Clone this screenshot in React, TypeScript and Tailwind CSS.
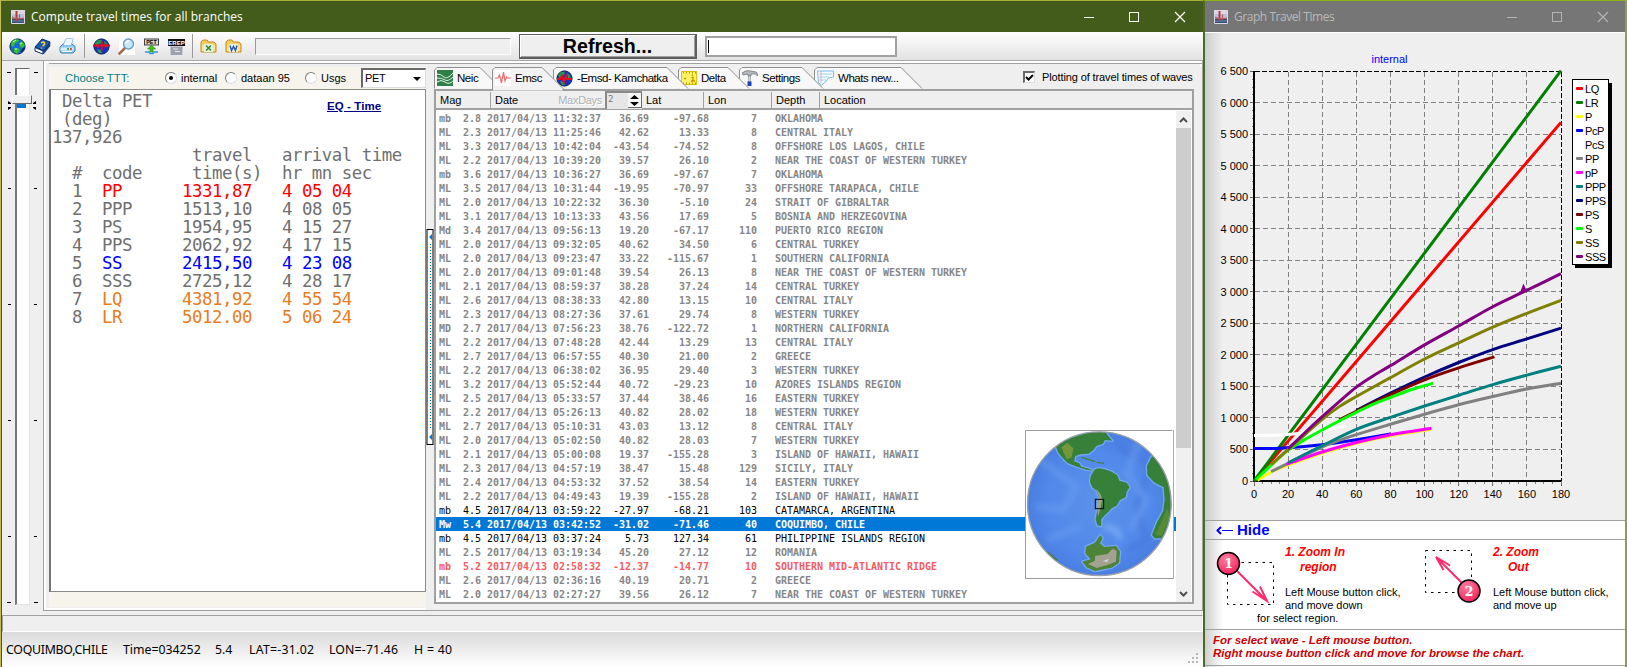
import React from "react";

type Tone = "gray" | "black" | "red" | "selected";
type Quake = [string, string, string, string, string, string, string, Tone?];

const quakes: Quake[] = [
  ["mb", "2.8", "11:32:37", "36.69", "-97.68", "7", "OKLAHOMA"],
  ["ML", "2.3", "11:25:46", "42.62", "13.33", "8", "CENTRAL ITALY"],
  ["ML", "3.3", "10:42:04", "-43.54", "-74.52", "8", "OFFSHORE LOS LAGOS, CHILE"],
  ["ML", "2.2", "10:39:20", "39.57", "26.10", "2", "NEAR THE COAST OF WESTERN TURKEY"],
  ["mb", "3.6", "10:36:27", "36.69", "-97.67", "7", "OKLAHOMA"],
  ["ML", "3.5", "10:31:44", "-19.95", "-70.97", "33", "OFFSHORE TARAPACA, CHILE"],
  ["ML", "2.0", "10:22:32", "36.30", "-5.10", "24", "STRAIT OF GIBRALTAR"],
  ["ML", "3.1", "10:13:33", "43.56", "17.69", "5", "BOSNIA AND HERZEGOVINA"],
  ["Md", "3.4", "09:56:13", "19.20", "-67.17", "110", "PUERTO RICO REGION"],
  ["ML", "2.0", "09:32:05", "40.62", "34.50", "6", "CENTRAL TURKEY"],
  ["ML", "2.0", "09:23:47", "33.22", "-115.67", "1", "SOUTHERN CALIFORNIA"],
  ["ML", "2.0", "09:01:48", "39.54", "26.13", "8", "NEAR THE COAST OF WESTERN TURKEY"],
  ["ML", "2.1", "08:59:37", "38.28", "37.24", "14", "CENTRAL TURKEY"],
  ["ML", "2.6", "08:38:33", "42.80", "13.15", "10", "CENTRAL ITALY"],
  ["ML", "2.3", "08:27:36", "37.61", "29.74", "8", "WESTERN TURKEY"],
  ["MD", "2.7", "07:56:23", "38.76", "-122.72", "1", "NORTHERN CALIFORNIA"],
  ["ML", "2.2", "07:48:28", "42.44", "13.29", "13", "CENTRAL ITALY"],
  ["ML", "2.7", "06:57:55", "40.30", "21.00", "2", "GREECE"],
  ["ML", "2.2", "06:38:02", "36.95", "29.40", "3", "WESTERN TURKEY"],
  ["ML", "3.2", "05:52:44", "40.72", "-29.23", "10", "AZORES ISLANDS REGION"],
  ["ML", "2.5", "05:33:57", "37.44", "38.46", "16", "EASTERN TURKEY"],
  ["ML", "2.2", "05:26:13", "40.82", "28.02", "18", "WESTERN TURKEY"],
  ["ML", "2.7", "05:10:31", "43.03", "13.12", "8", "CENTRAL ITALY"],
  ["ML", "2.0", "05:02:50", "40.82", "28.03", "7", "WESTERN TURKEY"],
  ["ML", "2.1", "05:00:08", "19.37", "-155.28", "3", "ISLAND OF HAWAII, HAWAII"],
  ["ML", "2.3", "04:57:19", "38.47", "15.48", "129", "SICILY, ITALY"],
  ["ML", "2.4", "04:53:32", "37.52", "38.54", "14", "EASTERN TURKEY"],
  ["ML", "2.2", "04:49:43", "19.39", "-155.28", "2", "ISLAND OF HAWAII, HAWAII"],
  ["mb", "4.5", "03:59:22", "-27.97", "-68.21", "103", "CATAMARCA, ARGENTINA", "black"],
  ["Mw", "5.4", "03:42:52", "-31.02", "-71.46", "40", "COQUIMBO, CHILE", "selected"],
  ["mb", "4.5", "03:37:24", "5.73", "127.34", "61", "PHILIPPINE ISLANDS REGION", "black"],
  ["ML", "2.5", "03:19:34", "45.20", "27.12", "12", "ROMANIA"],
  ["mb", "5.2", "02:58:32", "-12.37", "-14.77", "10", "SOUTHERN MID-ATLANTIC RIDGE", "red"],
  ["ML", "2.6", "02:36:16", "40.19", "20.71", "2", "GREECE"],
  ["ML", "2.0", "02:27:27", "39.56", "26.12", "7", "NEAR THE COAST OF WESTERN TURKEY"],
];

const toneClass: Record<Tone, string> = {
  gray: "font-bold text-[#868686]",
  black: "font-normal text-black",
  red: "font-bold text-[#f45c60]",
  selected: "bg-[#0078d7] font-bold text-white",
};

const quakeLine = ([type, mag, time, lat, lon, depth, place]: Quake) =>
  `${type}  ${mag} 2017/04/13 ${time}${lat.padStart(8)}${lon.padStart(10)}${depth.padStart(8)}   ${place}`;

const phases: [string, string, string, string][] = [
  ["PP", "1331,87", "4 05 04", "text-[#ff0000]"],
  ["PPP", "1513,10", "4 08 05", ""],
  ["PS", "1954,95", "4 15 27", ""],
  ["PPS", "2062,92", "4 17 15", ""],
  ["SS", "2415,50", "4 23 08", "text-[#0000ff]"],
  ["SSS", "2725,12", "4 28 17", ""],
  ["LQ", "4381,92", "4 55 54", "text-[#e87d22]"],
  ["LR", "5012.00", "5 06 24", "text-[#e87d22]"],
];

/* ---------- icons ---------- */

function AppIcon() {
  return (
    <svg width="14" height="14" viewBox="0 0 14 14">
      <rect width="14" height="14" fill="#b9c3dc" />
      <path d="M0 0h14v4H0z" fill="#e0d5e0" />
      <rect y="8.500" width="14" height="5.500" fill="#34507a" />
      <path d="M1 11h12" stroke="#6d88ad" />
      <path d="M5.500 1v10" stroke="#b8383e" strokeWidth="2" />
      <path d="M8.500 4.500v5M1 7q4 3 12 1" stroke="#c0585c" strokeWidth="1.200" fill="none" />
      <path d="M.5.5h13v13H.5z" fill="none" stroke="#d9d9e6" />
    </svg>
  );
}

function Globe({ pulse = false, band = false }: { pulse?: boolean; band?: boolean }) {
  return (
    <svg width="17" height="17" viewBox="0 0 17 17">
      <circle cx="8.5" cy="8.5" r="7.6" fill={pulse ? "#1a2fc4" : "#1468e0"} stroke="#0b2348" />
      {pulse ? (
        <path d="M2 5l3-3 4 0-1 3-3 2-2 1zM11 3l3 2 1 4-3-1zM4 11l4 1 1 3-3 0z" fill="#27984a" />
      ) : (
        <>
          <path d="M2 6l1-3 4-2 3 1-1 2-3 1-1 3-2 1zM10 5l3-2 3 4-2 3-3-1zM5 10l4 0 2 2-3 4-3-2z" fill="#35c02f" />
          <path d="M4 4l3-2M11 6l2-1M6 11h2" stroke="#d8ffd0" />
          <path d="M12 14l3-4" stroke="#0a1f50" strokeWidth="1.500" />
        </>
      )}
      {band && <path d="M1 9h3l2-3 2 6 2-6 1 3h5" stroke="#e60f1d" strokeWidth="2" fill="none" />}
      {pulse && !band && <path d="M0 7.500h17M9 3.500v9M5 6v4M12.500 5.500v4" stroke="#e60f1d" strokeWidth="1.800" fill="none" />}
    </svg>
  );
}

function BookIcon() {
  return (
    <svg width="17" height="17" viewBox="0 0 17 17">
      <path d="M1 9L8 1l8 3-6 9z" fill="#1b5ab4" stroke="#0d2f66" />
      <path d="M1 9.500v3.500l8 3v-3z" fill="#fff" stroke="#0d2f66" />
      <path d="M9.500 13.500L16 4.500V8L9.500 16z" fill="#123f85" stroke="#0d2f66" strokeWidth=".6" />
      <path d="M7 5q3-2 3.500 0T8.500 8M7.500 9.600v1" stroke="#ffd530" strokeWidth="1.500" fill="none" />
    </svg>
  );
}

function PrinterIcon() {
  return (
    <svg width="17" height="17" viewBox="0 0 17 17">
      <path d="M4.500 7l2.500-6h7l-2 6z" fill="#e9f6ff" stroke="#4c93c8" />
      <path d="M1 9l3-3h9l3 2.500v4.500l-2 2H2l-1-2z" fill="#8ec6ea" stroke="#3f82b6" />
      <path d="M4.500 7l2.500-6h7l-2 6z" fill="#e9f6ff" />
      <path d="M1.500 9.500h13v3h-13z" fill="#d6effc" />
      <path d="M3 13.500h10" stroke="#fff" />
      <path d="M8 11h2" stroke="#0b9a2e" strokeWidth="1.400" />
      <path d="M11 11h2" stroke="#e02020" strokeWidth="1.400" />
    </svg>
  );
}

function MagnifierIcon() {
  return (
    <svg width="17" height="17" viewBox="0 0 17 17">
      <rect x="1" y="1" width="16" height="16" fill="#fff" />
      <path d="M1.500 15.500L7 10" stroke="#a5684a" strokeWidth="2.600" strokeLinecap="round" />
      <circle cx="10.500" cy="6" r="5" fill="#c6e6fb" stroke="#6a9cc8" strokeWidth="1.400" />
      <path d="M8 6q0-3 3-3" stroke="#fff" strokeWidth="1.400" fill="none" />
    </svg>
  );
}

function PetIcon() {
  return (
    <svg width="17" height="17" viewBox="0 0 17 17">
      <rect x="1.500" y="1" width="14" height="6" fill="#dcdcdc" stroke="#3c3c3c" />
      <text x="8.500" y="6.200" textAnchor="middle" fontFamily="Liberation Sans" fontWeight="700" fontSize="5.500">PET</text>
      <path d="M8.500 7l4 4h-2.500v3H7v-3H4.500z" fill="#3fc019" stroke="#258a0d" strokeWidth=".6" />
      <path d="M2 14h4l1 1.500h3l1-1.500h4" stroke="#2c9ad8" strokeWidth="1.600" fill="none" />
    </svg>
  );
}

function RepIcon() {
  return (
    <svg width="17" height="17" viewBox="0 0 17 17">
      <rect x="2" y="7" width="13" height="10" fill="#c8c9d2" />
      <rect x="3" y="9" width="11" height="8" fill="#9fa0ad" />
      <path d="M5 11h5M7 13.500h5" stroke="#e6e6ee" />
      <rect width="17" height="7" y="1" fill="#101010" />
      <text x="8.500" y="6.700" textAnchor="middle" fontFamily="Liberation Sans" fontWeight="700" fontSize="6" fill="#fff">EREP</text>
    </svg>
  );
}

function FolderIcon({ kind }: { kind: "X" | "W" }) {
  return (
    <svg width="17" height="17" viewBox="0 0 17 17">
      <path d="M1 14V4l2-2h4l1.500 2H14l2 2v8z" fill="#f3ce5c" stroke="#c58a1d" />
      <path d="M2 7h13v6H2z" fill="#fbe48b" />
      <rect x="4" y="6" width="9" height="8" fill={kind === "X" ? "#e9f3e4" : "#e9effa"} />
      {kind === "X" ? (
        <path d="M6 7.500l5 5M11 7.500l-5 5" stroke="#2f8f3a" strokeWidth="1.700" />
      ) : (
        <path d="M5 7.500l1.500 5 2-4 2 4 1.500-5" stroke="#2a56b8" strokeWidth="1.500" fill="none" />
      )}
    </svg>
  );
}

function NeicIcon() {
  return (
    <svg width="16" height="16" viewBox="0 0 16 16">
      <rect width="16" height="16" fill="#2f7f49" />
      <path d="M0 4q4 0 7 3t9-4M0 8q5 0 8 2t8-3M0 12q4-3 8 0t8-1" stroke="#dff2e2" fill="none" />
    </svg>
  );
}

function EmscIcon() {
  return (
    <svg width="16" height="16" viewBox="0 0 16 16">
      <rect width="16" height="16" fill="#fff" />
      <path d="M0 8h3l1.500-3 2 8 2-11 1.500 9 1.500-4 1 1h4" stroke="#f26a6a" strokeWidth="1.200" fill="none" />
    </svg>
  );
}

function DeltaIcon() {
  return (
    <svg width="16" height="16" viewBox="0 0 16 16">
      <rect x=".5" y="1.500" width="15" height="13" fill="#fff266" stroke="#e0c400" />
      <path d="M2 2.500h13M2 13.500h13" stroke="#b89b00" strokeDasharray="1 2" strokeWidth="2" />
      <path d="M3 8.500h2M11.500 4.500V6M10.500 7.500h1.500v3.500M10 11h4" stroke="#c79200" strokeWidth="1.300" fill="none" />
    </svg>
  );
}

function HammerIcon() {
  return (
    <svg width="16" height="16" viewBox="0 0 16 16">
      <path d="M0 3q4-3.500 9-2l5 1q2 1 1.500 4l-2-2H9v2H6V4L1 5z" fill="#b6babf" stroke="#696d73" strokeWidth=".7" />
      <path d="M6.500 6h2v6h-2z" fill="#d8dbe0" stroke="#777" strokeWidth=".5" />
      <path d="M5.500 11.500h4V16h-4z" fill="#1744b8" />
    </svg>
  );
}

function NoteIcon() {
  return (
    <svg width="17" height="16" viewBox="0 0 17 16">
      <path d="M.5 1h16v6l-5 1-3 4-4 3-3-2z" fill="#f3fbff" stroke="#79bfe8" />
      <path d="M2 4h13M2 7h10M2 10h7" stroke="#8ccbe6" strokeWidth=".8" />
      <path d="M4 1v12" stroke="#f2a0a8" strokeWidth=".8" />
    </svg>
  );
}

function CaptionButtons({ dim = false }: { dim?: boolean }) {
  return (
    <svg width="104" height="12" viewBox="0 0 104 12" fill="none" stroke={dim ? "#b4b4b4" : "#ffffff"}>
      <path d="M0 6.500h10M45.500 1.500h9v9h-9z" shapeRendering="crispEdges" />
      <path d="M91 1l10 10M101 1L91 11" strokeWidth="1.200" />
    </svg>
  );
}

/* ---------- main window ---------- */

function Toolbar() {
  const slot = "flex w-[25px] shrink-0 justify-center";
  return (
    <div className="flex h-[29px] shrink-0 items-center border-b border-[#a8a8a8] bg-linear-to-b from-white to-[#e2e2e2] pl-[3px]">
      <span className={slot}><Globe /></span>
      <span className={slot}><BookIcon /></span>
      <span className={slot}><PrinterIcon /></span>
      <span className="mr-[4px] ml-[4px] h-[24px] w-px bg-[#9a9a9a]" />
      <span className={slot}><Globe pulse /></span>
      <span className={slot}><MagnifierIcon /></span>
      <span className={slot}><PetIcon /></span>
      <span className={slot}><RepIcon /></span>
      <span className="mr-[3px] ml-[3px] h-[24px] w-px bg-[#9a9a9a]" />
      <span className={slot}><FolderIcon kind="X" /></span>
      <span className={slot}><FolderIcon kind="W" /></span>
      <span className="ml-[9px] h-[17px] w-[256px] border border-t-[#9a9a9a] border-r-white border-b-white border-l-[#9a9a9a] bg-[#efefef]" />
      <span className="ml-[8px] flex h-[25px] w-[178px] items-center justify-center border border-t-[#5f5f5f] border-r-2 border-b-2 border-[#5f5f5f] bg-[#efefef] pt-[2px] text-[19.600px] font-bold shadow-[inset_1px_1px_0_#fff,inset_-1px_-1px_0_#a0a0a0]">
        Refresh...
      </span>
      <span className="ml-[8px] flex h-[21px] w-[192px] items-center border-2 border-[#a0a0a0] bg-white pl-px">
        <span className="h-[13px] w-px bg-black" />
      </span>
    </div>
  );
}

function Slider() {
  const tick = "h-px bg-black";
  const ticks = (
    <>
      <span className={`${tick} mt-[8px] w-[4px]`} />
      <span className={`${tick} mt-[115px] w-[3px]`} />
      <span className={`${tick} mt-[115px] w-[3px]`} />
      <span className={`${tick} mt-[115px] w-[3px]`} />
      <span className={`${tick} mt-[115px] w-[3px]`} />
      <span className={`${tick} mt-[65px] w-[4px]`} />
    </>
  );
  return (
    <div className="relative flex w-[41px] shrink-0 justify-between bg-[#efefef] pr-[5px] pl-[5px]">
      <div className="flex flex-col items-end">{ticks}</div>
      <div className="mt-[4px] -ml-px h-[537px] w-[15px] border border-t-[#696969] border-r-[#e3e3e3] border-b-[#e3e3e3] border-l-2 border-l-[#777] bg-white" />
      <div className="flex flex-col items-start">{ticks}</div>
      <span className="absolute top-[40px] left-[15px] h-[4px] w-[9px] bg-[#0078d7]" />
      <span className="absolute top-[31px] left-[10px] h-[9px] w-[20px] border border-white border-r-[#696969] border-b-[#696969] bg-[#efefef]" />
      <svg className="absolute top-[37px] left-[6px]" width="28" height="10" viewBox="0 0 28 10">
        <path d="M0 0l3 2v1H0zM0 9l3-2V6H0zM28 0l-3 2v1h3zM28 9l-3-2V6h3z" fill="#000" />
      </svg>
    </div>
  );
}

function Radio({ on = false, children }: { on?: boolean; children: string }) {
  return (
    <span className="flex items-center gap-[4px]">
      <span className="flex size-[12px] shrink-0 items-center justify-center rounded-full border border-[#7d7d7d] border-r-[#dcdcdc] border-b-[#dcdcdc] bg-white">
        {on && <span className="size-[4px] rounded-full bg-black" />}
      </span>
      {children}
    </span>
  );
}

function ResultPanel() {
  return (
    <div className="flex w-[377px] shrink-0 flex-col bg-[#f7f4ee]">
      <div className="flex h-[22px] items-center pl-[16px] text-[11px]">
        <span className="w-[100px] text-[11.300px] text-[#008080]">Choose TTT:</span>
        <span className="w-[60px]"><Radio on>internal</Radio></span>
        <span className="w-[80px]"><Radio>dataan 95</Radio></span>
        <span className="w-[56px]"><Radio>Usgs</Radio></span>
        <span className="flex h-[20px] w-[65px] items-center justify-between border border-t-2 border-l-2 border-[#dcdcdc] border-t-[#696969] border-l-[#696969] bg-white pr-[4px] pl-[2px] text-[11px] tracking-[-0.3px]">
          PET
          <svg width="8" height="4" viewBox="0 0 8 4"><path d="M0 0h8L4 4z" /></svg>
        </span>
      </div>
      <div className="h-[503px] border border-l-2 border-[#8a8a8a] border-l-[#777] bg-white pt-[2px] pl-px">
        <div className="relative font-['DejaVu_Sans_Mono',monospace] text-[17.400px] leading-[18px] tracking-[-0.475px] whitespace-pre text-[#6f6f6f]">
          <div> Delta PET</div>
          <div> (deg)</div>
          <div>137,926</div>
          <div>{"              travel   arrival time"}</div>
          <div>{"  #  code     time(s)  hr mn sec"}</div>
          {phases.map(([code, time, arrival, color], i) => (
            <div key={code}>
              {`  ${i + 1}  `}
              <span className={color}>{`${code.padEnd(8)}${time}   ${arrival}`}</span>
            </div>
          ))}
          <span className="absolute top-[5px] left-[275px] font-['Liberation_Sans',sans-serif] text-[11.500px] font-bold tracking-[0.080px] text-[#000080] underline">
            EQ - Time
          </span>
        </div>
      </div>
    </div>
  );
}

function Splitter() {
  return (
    <div className="flex w-[8px] shrink-0 flex-col bg-[#efefef] pt-[162px]">
      <svg width="8" height="216" viewBox="0 0 8 216">
        <rect x="1" y=".5" width="6" height="215" fill="#fff" stroke="#000" />
        <path d="M6 5v6L3 8zM6 205v6l-3-3z" fill="#0078d7" />
        <path d="M4.500 15v185" stroke="#0078d7" strokeDasharray="1 2" />
      </svg>
    </div>
  );
}

function Tab({ name, icon, width, overlap, layer, active = false }: {
  name: string; icon: React.ReactNode; width: number; overlap: number; layer: string; active?: boolean;
}) {
  const top = width + overlap - 21;
  return (
    <div className={`relative flex h-[22px] shrink-0 items-center gap-[4px] pl-[3px] ${layer}`} style={{ width }}>
      <svg className="absolute top-0 left-0 overflow-visible" width={width} height="23">
        <path
          d={`M.5 ${active ? 23.5 : 21.5}V3L3 .5H${top}L${top + 21} 21.500${active ? "V23.500" : ""}`}
          fill={active ? "#f2f2f2" : "#f8f8f8"}
          stroke="#909090"
        />
      </svg>
      <span className="relative flex">{icon}</span>
      <span className="relative pt-px text-[11.500px] tracking-[-0.450px] whitespace-nowrap">{name}</span>
    </div>
  );
}

const headerCell = "flex shrink-0 items-center border-r border-[#a0a0a0] pl-[4px]";

function GlobeMap() {
  return (
    <svg width="149" height="149" viewBox="135 90 447 447">
      <rect x="135" y="90" width="447" height="447" fill="#fff" />
      <path d="M136.500 535V91.500H577M132 535.500h449V88" fill="none" stroke="#9c9c9c" strokeWidth="3" />
      <defs>
        <radialGradient id="sea" cx="50%" cy="50%" r="50%">
          <stop offset="0" stopColor="#5c92ea" />
          <stop offset=".7" stopColor="#5289ea" />
          <stop offset="1" stopColor="#4a7fe2" />
        </radialGradient>
        <clipPath id="disc"><circle cx="358" cy="311" r="215" /></clipPath>
        <filter id="soft"><feGaussianBlur stdDeviation="9" /></filter>
      </defs>
      <circle cx="358" cy="311" r="216" fill="url(#sea)" />
      <g clipPath="url(#disc)">
        <g filter="url(#soft)" fill="none" strokeWidth="12">
          <path d="M450 150L510 200L470 320L500 420L440 450M400 130L470 170" stroke="#4677da" />
          <path d="M480 120L440 220L500 300L450 390M180 180L290 260L250 330L170 320M200 420L300 380" stroke="#679bf0" />
          <path d="M370 380L410 390L420 420" stroke="#83b4f6" />
        </g>
        <g strokeLinejoin="round" stroke="#72a8f2" strokeWidth="8" paintOrder="stroke">
          <path d="M228 140L245 122L275 108L325 98L345 90L375 94L385 108L397 122L375 120L368 132L350 137L340 150L326 161L302 163L286 168L282 184L298 190L304 200L322 205L343 212L318 209L300 203L275 194L262 188L248 174L235 158z" fill="#37803a" />
          <path d="M332 228L345 208L355 205L375 208L395 215L412 226L418 242L440 248L449 262L440 275L437 292L420 300L410 317L395 325L385 336L373 347L364 358L363 378L352 376L347 358L352 330L357 292L350 272L338 263L330 246z" fill="#37803a" />
          <path d="M361 405L368 415L360 430L373 441L408 438L420 455L417 488L395 503L370 508L345 513L320 502L307 485L332 478L316 460L318 440L345 428z" fill="#4d8336" />
          <path d="M515 170L530 165L560 205L580 280L580 350L550 415L524 415L516 405L530 368L550 332L554 298L551 262L522 247L502 225L501 197z" fill="#37803a" />
        </g>
        <path d="M244 142L262 128L280 145L275 172L260 178z" fill="#75973b" />
        <path d="M348 266L361 282L367 300L360 330L354 350L352 320L358 292z" fill="#9da580" />
        <path d="M324 492L345 482L345 468L382 462L398 446L410 452L408 485L380 496L350 504z" fill="#a3a191" />
        <path d="M368 484l18-8-4 10z" fill="#d8d8d2" />
        <path d="M525 405L545 365L562 325L570 350L545 408z" fill="#588b35" />
        <path d="M305 172L325 178L345 185M350 187L372 190" stroke="#41833c" strokeWidth="4" fill="none" />
        <path d="M200 455L232 482" stroke="#49723c" strokeWidth="5" />
      </g>
      <circle cx="358" cy="311" r="215.500" fill="none" stroke="#9a9fa8" strokeWidth="4" />
      <rect x="346" y="298" width="25" height="28" fill="none" stroke="#000" strokeWidth="3" />
    </svg>
  );
}

function QuakePanel() {
  return (
    <div className="flex flex-1 flex-col bg-[#efefef]">
      <div className="flex h-[22px] pr-[12px]">
        <Tab name="Neic" icon={<NeicIcon />} width={58} overlap={9} layer="z-10" />
        <Tab name="Emsc" icon={<EmscIcon />} width={61} overlap={10} layer="z-20" active />
        <Tab name="-Emsd- Kamchatka" icon={<Globe pulse band />} width={125} overlap={10} layer="z-[9]" />
        <Tab name="Delta" icon={<DeltaIcon />} width={61} overlap={10} layer="z-[8]" />
        <Tab name="Settings" icon={<HammerIcon />} width={75} overlap={9} layer="z-[7]" />
        <Tab name="Whats new..." icon={<NoteIcon />} width={108} overlap={0} layer="z-[6]" />
        <span className="ml-auto flex items-center gap-[7px] pb-[2px] text-[11px]">
          <span className="flex size-[12px] items-center justify-center border border-t-2 border-l-2 border-[#dcdcdc] border-t-[#696969] border-l-[#696969] bg-white">
            <svg width="9" height="8" viewBox="0 0 9 8"><path d="M1 3l2.500 2.500L8 1" stroke="#000" strokeWidth="2" fill="none" /></svg>
          </span>
          <span className="w-[148px] tracking-[-0.120px] whitespace-nowrap">Plotting of travel times of waves</span>
        </span>
      </div>
      <div className="relative flex h-[515px] w-[760px] flex-col border-2 border-[#a0a0a0] bg-white">
        <div className="flex h-[19px] shrink-0 border-b-2 border-[#a0a0a0] bg-[#efefef] pt-px text-[11px]">
          <span className={`${headerCell} w-[55px]`}>Mag</span>
          <span className="flex w-[62px] items-center pl-[4px]">Date</span>
          <span className="flex w-[52px] items-center justify-end pr-[3px] tracking-[-0.3px] text-[#b0b0b0] [text-shadow:1px_1px_0_#fff]">MaxDays</span>
          <span className="-mt-px flex h-[18px] w-[37px] items-start justify-between border-t-2 border-l-2 border-[#8a8a8a] bg-[#e6e6e6] pl-px font-['DejaVu_Sans_Mono',monospace] text-[9px] text-[#7a7a7a]">
            2
            <span className="flex h-[15px] w-[14px] flex-col items-center justify-center gap-[3px] border-r border-b border-[#696969] bg-[#f6f6f6]">
              <svg width="9" height="4" viewBox="0 0 9 4"><path d="M0 4h9L4.500 0z" /></svg>
              <svg width="9" height="4" viewBox="0 0 9 4"><path d="M0 0h9L4.500 4z" /></svg>
            </span>
          </span>
          <span className={`${headerCell} w-[62px]`}>Lat</span>
          <span className={`${headerCell} w-[68px]`}>Lon</span>
          <span className={`${headerCell} w-[48px]`}>Depth</span>
          <span className="flex items-center pl-[4px]">Location</span>
        </div>
        <div className="flex min-h-0 flex-1 pt-px">
          <div className="w-[740px] shrink-0 font-['DejaVu_Sans_Mono',monospace] text-[10px] leading-[15px] tracking-[-0.021px] whitespace-pre">
            {quakes.map((q) => (
              <div key={q[2]} className={`h-[14px] pl-[3px] ${toneClass[q[7] ?? "gray"]}`}>
                {quakeLine(q)}
              </div>
            ))}
          </div>
          <div className="flex w-[15px] flex-col bg-[#f0f0f0]">
            <svg width="15" height="17" viewBox="0 0 15 17"><path d="M4 11l3.500-3.500L11 11" stroke="#505050" strokeWidth="2" fill="none" /></svg>
            <span className="h-[320px] bg-[#cdcdcd]" />
            <svg className="mt-auto" width="15" height="17" viewBox="0 0 15 17"><path d="M4 7l3.500 3.500L11 7" stroke="#505050" strokeWidth="2" fill="none" /></svg>
          </div>
        </div>
        <div className="absolute top-[339px] left-[589px]"><GlobeMap /></div>
      </div>
    </div>
  );
}

function MainWindow() {
  return (
    <div className="flex w-[1203px] shrink-0 flex-col border-t border-l border-t-[#a9b040] border-l-[#c4bc4c] bg-[#435c1c] pl-px">
      <div className="flex h-[31px] shrink-0 items-center bg-[#435c1c] pl-[9px] font-['Open_Sans',sans-serif] text-[12px] text-white">
        <AppIcon />
        <span className="ml-[6px] tracking-[0.040px]">Compute travel times for all branches</span>
        <span className="mr-[15px] ml-auto"><CaptionButtons /></span>
      </div>
      <Toolbar />
      <div className="flex min-h-0 flex-1 flex-col bg-[#efefef]">
        <div className="flex h-[554px] shrink-0 pt-[3px]">
          <Slider />
          <div className="-mt-[3px] mb-[4px] flex flex-1 border border-t-0 border-[#a0a0a0] bg-[#efefef] pt-[2px] pl-[5px] shadow-[inset_2px_2px_0_#fff,inset_-2px_-2px_0_#fff]">
            <div className="flex flex-1 border-t border-[#a0a0a0] pt-[3px]">
              <div className="mb-[3px] flex bg-[#f7f4ee]"><ResultPanel /></div>
              <Splitter />
              <QuakePanel />
            </div>
          </div>
        </div>
        <div className="h-[17px] shrink-0 border border-[#a0a0a0] border-r-white border-b-white" />
        <div className="flex flex-1 items-center bg-linear-to-b from-[#dadada] to-white pt-px pl-[4px] font-['Noto_Sans',sans-serif] text-[12.300px] whitespace-nowrap">
          <span className="w-[117px] tracking-[-0.250px]">COQUIMBO,CHILE</span>
          <span className="w-[92px]">Time=034252</span>
          <span className="w-[34px]">5.4</span>
          <span className="w-[80px] tracking-[0.250px]">LAT=-31.02</span>
          <span className="w-[85px] tracking-[0.150px]">LON=-71.46</span>
          <span className="tracking-[0.300px]">H = 40</span>
          <svg className="mt-[16px] mr-[4px] ml-auto" width="11" height="11" viewBox="0 0 11 11" fill="#b8b8b8">
            <path d="M8 0h2v2H8zM4 4h2v2H4zM8 4h2v2H8zM0 8h2v2H0zM4 8h2v2H4zM8 8h2v2H8z" />
          </svg>
        </div>
      </div>
    </div>
  );
}

/* ---------- graph window ---------- */

type Point = [number, number];

const px = (deg: number) => 49 + deg * 1.7056;
const py = (sec: number) => 448 - sec * 0.06303;

const curves: { color: string; points: Point[] }[] = [
  { color: "#ff0000", points: [[0, 0], [180, 5690]] },
  { color: "#008000", points: [[0, 0], [180, 6510]] },
  { color: "#ffff00", points: [[2, 10], [10, 140], [20, 255], [40, 445], [60, 598], [80, 718], [104, 822]] },
  { color: "#0000ff", points: [[0, 515], [15, 520], [40, 575], [60, 655], [80, 745]] },
  { color: "#ffffff", points: [[0, 722], [15, 730], [30, 765], [54, 868]] },
  { color: "#808080", points: [[10, 150], [20, 280], [40, 540], [50, 645], [60, 735], [80, 900], [100, 1060], [120, 1210], [140, 1340], [160, 1460], [180, 1550]] },
  { color: "#ff00ff", points: [[19, 265], [40, 460], [60, 610], [80, 735], [104, 838]] },
  { color: "#008080", points: [[20, 290], [40, 560], [60, 820], [80, 1010], [100, 1190], [120, 1360], [140, 1530], [160, 1680], [180, 1820]] },
  { color: "#000080", points: [[60, 1120], [80, 1395], [100, 1650], [120, 1880], [140, 2085], [160, 2255], [180, 2425]] },
  { color: "#800000", points: [[50, 970], [60, 1105], [80, 1370], [100, 1605], [120, 1795], [141, 1970]] },
  { color: "#00ff00", points: [[1, 20], [10, 250], [20, 490], [30, 660], [40, 810], [50, 955], [60, 1090], [70, 1220], [80, 1325], [93, 1455], [105, 1550]] },
  { color: "#808000", points: [[10, 260], [20, 500], [30, 740], [40, 980], [50, 1180], [60, 1340], [80, 1640], [100, 1935], [120, 2190], [140, 2440], [160, 2660], [180, 2865]] },
  { color: "#800080", points: [[20, 510], [30, 770], [40, 1020], [50, 1260], [60, 1490], [70, 1670], [80, 1830], [100, 2160], [120, 2460], [140, 2765], [158, 3000], [180, 3290]] },
];

function smoothPath(points: Point[]) {
  const p = points.map(([x, y]) => [px(x), py(y)]);
  let d = `M${p[0][0]} ${p[0][1]}`;
  for (let i = 0; i < p.length - 1; i++) {
    const a = p[Math.max(i - 1, 0)];
    const b = p[i];
    const c = p[i + 1];
    const e = p[Math.min(i + 2, p.length - 1)];
    d += `C${b[0] + (c[0] - a[0]) / 6} ${b[1] + (c[1] - a[1]) / 6} ${c[0] - (e[0] - b[0]) / 6} ${c[1] - (e[1] - b[1]) / 6} ${c[0]} ${c[1]}`;
  }
  return d;
}

const legend: [string, string][] = [
  ["LQ", "#ff0000"], ["LR", "#008000"], ["P", "#ffff00"], ["PcP", "#0000ff"], ["PcS", "#ffffff"],
  ["PP", "#808080"], ["pP", "#ff00ff"], ["PPP", "#008080"], ["PPS", "#000080"], ["PS", "#800000"],
  ["S", "#00ff00"], ["SS", "#808000"], ["SSS", "#800080"],
];

const xTicks = [0, 20, 40, 60, 80, 100, 120, 140, 160, 180];
const yTicks = Array.from({ length: 14 }, (_, i) => i * 500);
const spaced = (n: number) => (n >= 1000 ? `${Math.floor(n / 1000)} ${String(n % 1000).padStart(3, "0")}` : String(n));
const snap = (n: number) => Math.floor(n) + 0.5;

function Chart() {
  return (
    <svg width="420" height="487" viewBox="0 0 420 487" fontFamily="Liberation Sans, Arial, sans-serif" fontSize="11">
      <text x="184.500" y="29.500" textAnchor="middle" fill="#0000ff">internal</text>
      <g shapeRendering="crispEdges" fill="none">
        {yTicks.slice(1, 13).map((t) => (
          <path key={t} d={`M50 ${snap(py(t))}H356`} stroke="#808080" strokeDasharray="5 3" />
        ))}
        {xTicks.slice(1, 9).map((t) => (
          <path key={t} d={`M${snap(px(t))} 39V448`} stroke="#808080" strokeDasharray="5 3" />
        ))}
        <path d="M50 38.500H356M356.500 38.500V448" stroke="#000" strokeDasharray="5 2" />
        {yTicks.map((t) => (
          <path key={t} d={`M45 ${snap(py(t))}h4`} stroke="#606060" />
        ))}
        {Array.from({ length: 52 }, (_, i) => (
          <path key={i} d={`M47 ${snap(py(i * 125))}h2`} stroke="#808080" />
        ))}
        {xTicks.map((t) => (
          <path key={t} d={`M${snap(px(t))} 448v5`} stroke="#606060" />
        ))}
        {Array.from({ length: 37 }, (_, i) => (
          <path key={i} d={`M${snap(px(i * 5))} 448v3`} stroke="#808080" />
        ))}
      </g>
      <path d="M49 38V448H356" stroke="#000" strokeWidth="2" fill="none" shapeRendering="crispEdges" />
      {curves.map(({ color, points }) => (
        <path key={color} d={smoothPath(points)} stroke={color} strokeWidth="3" fill="none" />
      ))}
      <path d={`M${px(156.5)} ${py(2980)}L${px(158)} ${py(3090)}L${px(159.5)} ${py(3000)}`} stroke="#800080" strokeWidth="2" fill="#800080" />
      {yTicks.map((t) => (
        <text key={t} x="43" y={py(t) + 4} textAnchor="end">{spaced(t)}</text>
      ))}
      {xTicks.map((t) => (
        <text key={t} x={px(t)} y="465" textAnchor="middle">{t}</text>
      ))}
      <rect x="370" y="50" width="37" height="185" fill="#000" />
      <rect x="367.500" y="46.500" width="36" height="185" fill="#fff" stroke="#000" />
      {legend.map(([name, color], i) => (
        <g key={name}>
          <rect x="371" y={54 + i * 14} width="7" height="3" rx="1" fill={color} />
          <text x="380" y={59.500 + i * 14} letterSpacing="-0.4">{name}</text>
        </g>
      ))}
    </svg>
  );
}

function ZoomHint({ outward = false }: { outward?: boolean }) {
  return (
    <svg width="60" height="56" viewBox="0 0 60 56">
      <defs>
        <radialGradient id={outward ? "ballB" : "ballA"} cx="40%" cy="30%" r="70%">
          <stop offset="0" stopColor="#ff7fa0" />
          <stop offset="1" stopColor="#f5235f" />
        </radialGradient>
      </defs>
      <rect
        x={outward ? 1.5 : 11.5} y={outward ? 2.5 : 12.5} width="46" height="42"
        fill="none" stroke="#000" strokeDasharray="2.500 4.500"
      />
      <g stroke="#ff2b6b" strokeWidth="2" fill="none">
        {outward ? <path d="M44 41L12 9M19.500 22L12 9L26 17.500" /> : <path d="M20 20L50 50M36.500 41.500L51 51L44 36.500" />}
      </g>
      <circle cx={outward ? 45 : 12.5} cy={outward ? 43 : 13.500} r="11" fill={outward ? "url(#ballB)" : "url(#ballA)"} stroke="#000" strokeWidth="1.500" />
      <text
        x={outward ? 45 : 12.5} y={outward ? 47.500 : 18} textAnchor="middle" fill="#fff"
        fontFamily="DejaVu Serif, serif" fontWeight="700" fontSize="12.500"
      >
        {outward ? 2 : 1}
      </text>
    </svg>
  );
}

function GraphWindow() {
  return (
    <div className="flex w-[424px] shrink-0 flex-col border-t border-r-2 border-l-2 border-t-[#8db512] border-r-[#8aa04a] border-l-[#4a6b24]">
      <div className="flex h-[31px] shrink-0 items-center bg-[#767676] pl-[9px] font-['Open_Sans',sans-serif] text-[12px] text-[#b9b9b9]">
        <AppIcon />
        <span className="ml-[6px] tracking-[-0.450px]">Graph Travel Times</span>
        <span className="mr-[14px] ml-auto"><CaptionButtons dim /></span>
      </div>
      <div className="flex h-[635px] flex-col bg-linear-to-r from-[#cfcfcf] to-white to-[18px]">
        <div className="h-[488px] shrink-0 border-t border-white bg-linear-to-r from-[#cdcdcd] to-[#efefef] to-[18px]"><Chart /></div>
        <div className="flex h-[20px] shrink-0 items-center border-y border-[#a0a0a0] pl-[11px] text-[15px] font-bold text-[#0000ff]">
          <svg width="18" height="9" viewBox="0 0 18 9"><path d="M5 1L1.500 4.500L5 8" stroke="#0000ff" strokeWidth="2" fill="none" /><path d="M6 4.500h11" stroke="#0000ff" /></svg>
          <span className="ml-[3px]">Hide</span>
        </div>
        <div className="flex h-[89px] shrink-0 pt-[5px] text-[11px] leading-[13px]">
          <div className="ml-[11px] flex w-[208px]">
            <div className="mt-[5px] w-[69px] shrink-0"><ZoomHint /></div>
            <div className="relative whitespace-nowrap">
              <div className="text-[12px] leading-[15px] font-bold text-[#ff0000] italic">
                <div>1. Zoom In</div>
                <div className="pl-[15px]">region</div>
              </div>
              <div className="mt-[11px]">Left Mouse button click,</div>
              <div>and move down</div>
              <div className="-ml-[28px]">for select region.</div>
            </div>
          </div>
          <div className="flex">
            <div className="mt-[3px] w-[69px] shrink-0"><ZoomHint outward /></div>
            <div className="whitespace-nowrap">
              <div className="text-[12px] leading-[15px] font-bold text-[#ff0000] italic">
                <div>2. Zoom</div>
                <div className="pl-[15px]">Out</div>
              </div>
              <div className="mt-[11px]">Left Mouse button click,</div>
              <div>and move up</div>
            </div>
          </div>
        </div>
        <div className="flex h-[37px] shrink-0 flex-col border-y border-[#a0a0a0] pt-[4px] pl-[8px] text-[11.500px] leading-[13px] font-bold whitespace-nowrap text-[#cc0000] italic">
          <div>For select wave - Left mouse button.</div>
          <div>Right mouse button click and move for browse the chart.</div>
        </div>
      </div>
    </div>
  );
}

export default function App() {
  return (
    <div className="flex h-[667px] w-[1627px] overflow-hidden bg-[#8aa04a] font-['Liberation_Sans',Arial,sans-serif] text-black">
      <MainWindow />
      <GraphWindow />
    </div>
  );
}
